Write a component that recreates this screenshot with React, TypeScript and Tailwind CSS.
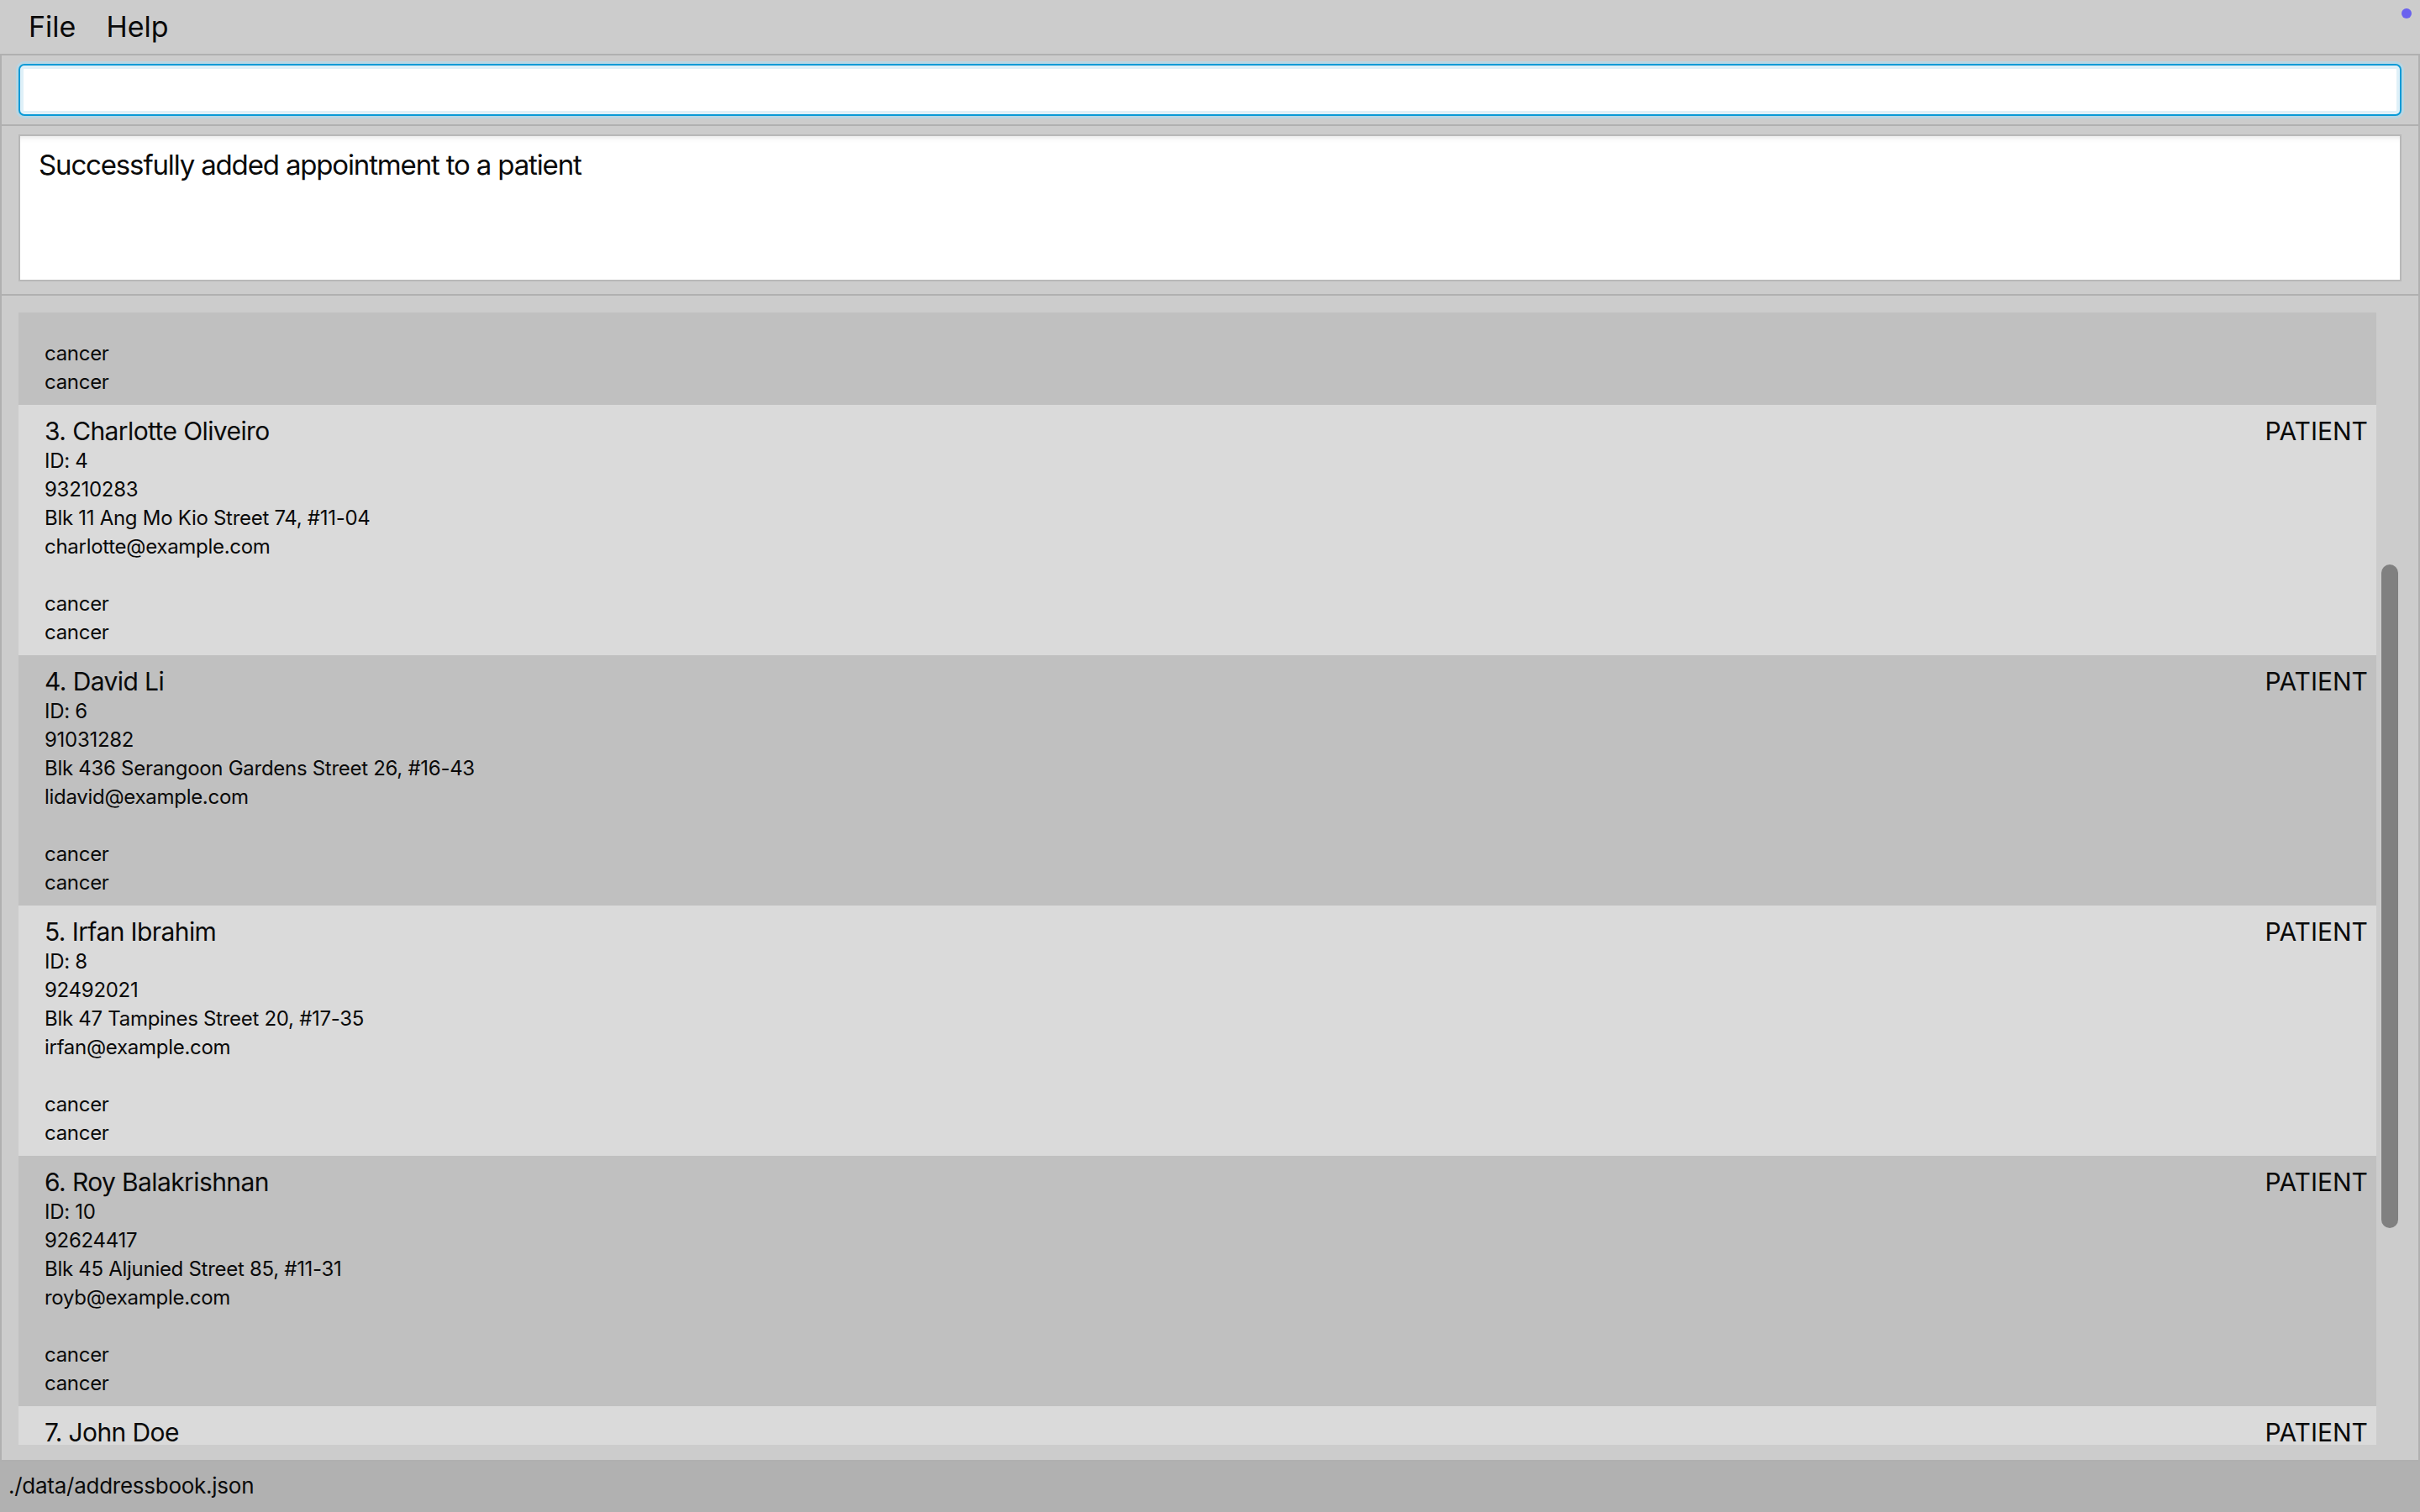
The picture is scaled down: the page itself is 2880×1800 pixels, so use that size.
import { useLayoutEffect, useRef } from "react";

interface Person {
  name: string;
  id: number;
  phone: string;
  address: string;
  email: string;
  tags: string[];
}

const persons: Person[] = [
  { name: "Alex Yeoh", id: 0, phone: "87438807", address: "Blk 30 Geylang Street 29, #06-40", email: "alexyeoh@example.com", tags: ["cancer", "cancer"] },
  { name: "Bernice Yu", id: 2, phone: "99272758", address: "Blk 30 Lorong 3 Serangoon Gardens, #07-18", email: "berniceyu@example.com", tags: ["cancer", "cancer"] },
  { name: "Charlotte Oliveiro", id: 4, phone: "93210283", address: "Blk 11 Ang Mo Kio Street 74, #11-04", email: "charlotte@example.com", tags: ["cancer", "cancer"] },
  { name: "David Li", id: 6, phone: "91031282", address: "Blk 436 Serangoon Gardens Street 26, #16-43", email: "lidavid@example.com", tags: ["cancer", "cancer"] },
  { name: "Irfan Ibrahim", id: 8, phone: "92492021", address: "Blk 47 Tampines Street 20, #17-35", email: "irfan@example.com", tags: ["cancer", "cancer"] },
  { name: "Roy Balakrishnan", id: 10, phone: "92624417", address: "Blk 45 Aljunied Street 85, #11-31", email: "royb@example.com", tags: ["cancer", "cancer"] },
  { name: "John Doe", id: 12, phone: "98765432", address: "311, Clementi Ave 2, #02-25", email: "johnd@example.com", tags: ["cancer", "cancer"] },
];

function PersonCard({ person, index }: { person: Person; index: number }) {
  return (
    <div
      className={`flex justify-between pl-[31px] pr-[10px] pt-[13px] pb-[10px] ${
        index % 2 === 0 ? "bg-[#dadada]" : "bg-[#c0c0c0]"
      }`}
    >
      <div className="flex flex-col text-[24px] leading-[34px] tracking-[-0.012em]">
        <div className="text-[30px] leading-[37px] tracking-[-0.02em]">
          {index + 1}. {person.name}
        </div>
        <div>ID: {person.id}</div>
        <div>{person.phone}</div>
        <div>{person.address}</div>
        <div>{person.email}</div>
        <div className="h-[34px]" />
        {person.tags.map((tag, i) => (
          <div key={i}>{tag}</div>
        ))}
      </div>
      <div className="text-[30px] leading-[37px]">PATIENT</div>
    </div>
  );
}

export default function App() {
  const listRef = useRef<HTMLDivElement>(null);

  useLayoutEffect(() => {
    if (listRef.current) listRef.current.scrollTop = 486;
  }, []);

  return (
    <div className="relative flex h-[1800px] w-[2880px] flex-col overflow-hidden bg-[#cccccc] font-['Inter','Noto_Sans',sans-serif] text-[#0a0a0a]">
      {/* menu bar */}
      <div className="flex h-[64px] shrink-0 items-center gap-[36px] pl-[34px] text-[34px] leading-[64px]">
        <span>File</span>
        <span>Help</span>
      </div>
      <div className="absolute right-[10px] top-[10px] h-[12px] w-[12px] rounded-full bg-[#6a62ee]" />

      {/* command box */}
      <div className="shrink-0 border-2 border-[#b0b0b0] px-[20px] py-[10px]">
        <div className="h-[62px] rounded-[7px] border-2 border-[#0a9ad6] bg-white shadow-[0_0_0_3px_#b9d6e3,inset_0_0_0_4px_#dff0f8]" />
      </div>

      {/* result display */}
      <div className="h-[202px] shrink-0 border-2 border-t-0 border-[#b0b0b0] px-[20px] pt-[10px]">
        <div className="h-[175px] border-2 border-[#b8b8b8] bg-white px-[22px] pt-[14px] text-[33px] leading-[41px] tracking-[-0.035em] shadow-[inset_0_7px_6px_-5px_rgba(0,0,0,0.1)]">
          Successfully added appointment to a patient
        </div>
      </div>

      {/* person list */}
      <div className="flex min-h-0 flex-1 border-2 border-t-0 border-[#b0b0b0] pb-[18px] pl-[20px] pr-[20px] pt-[20px]">
        <div ref={listRef} className="min-w-0 flex-1 overflow-hidden">
          {persons.map((p, i) => (
            <PersonCard key={p.id} person={p} index={i} />
          ))}
        </div>
        <div className="flex w-[30px] shrink-0 flex-col pl-[6px] pr-[4px]">
          <div className="mt-[300px] h-[790px] rounded-full bg-[#808080]" />
        </div>
      </div>

      {/* status bar */}
      <div className="h-[60px] shrink-0 bg-[#b1b1b1] pl-[10px] text-[26px] leading-[58px] tracking-[-0.01em]">
        ./data/addressbook.json
      </div>
    </div>
  );
}
